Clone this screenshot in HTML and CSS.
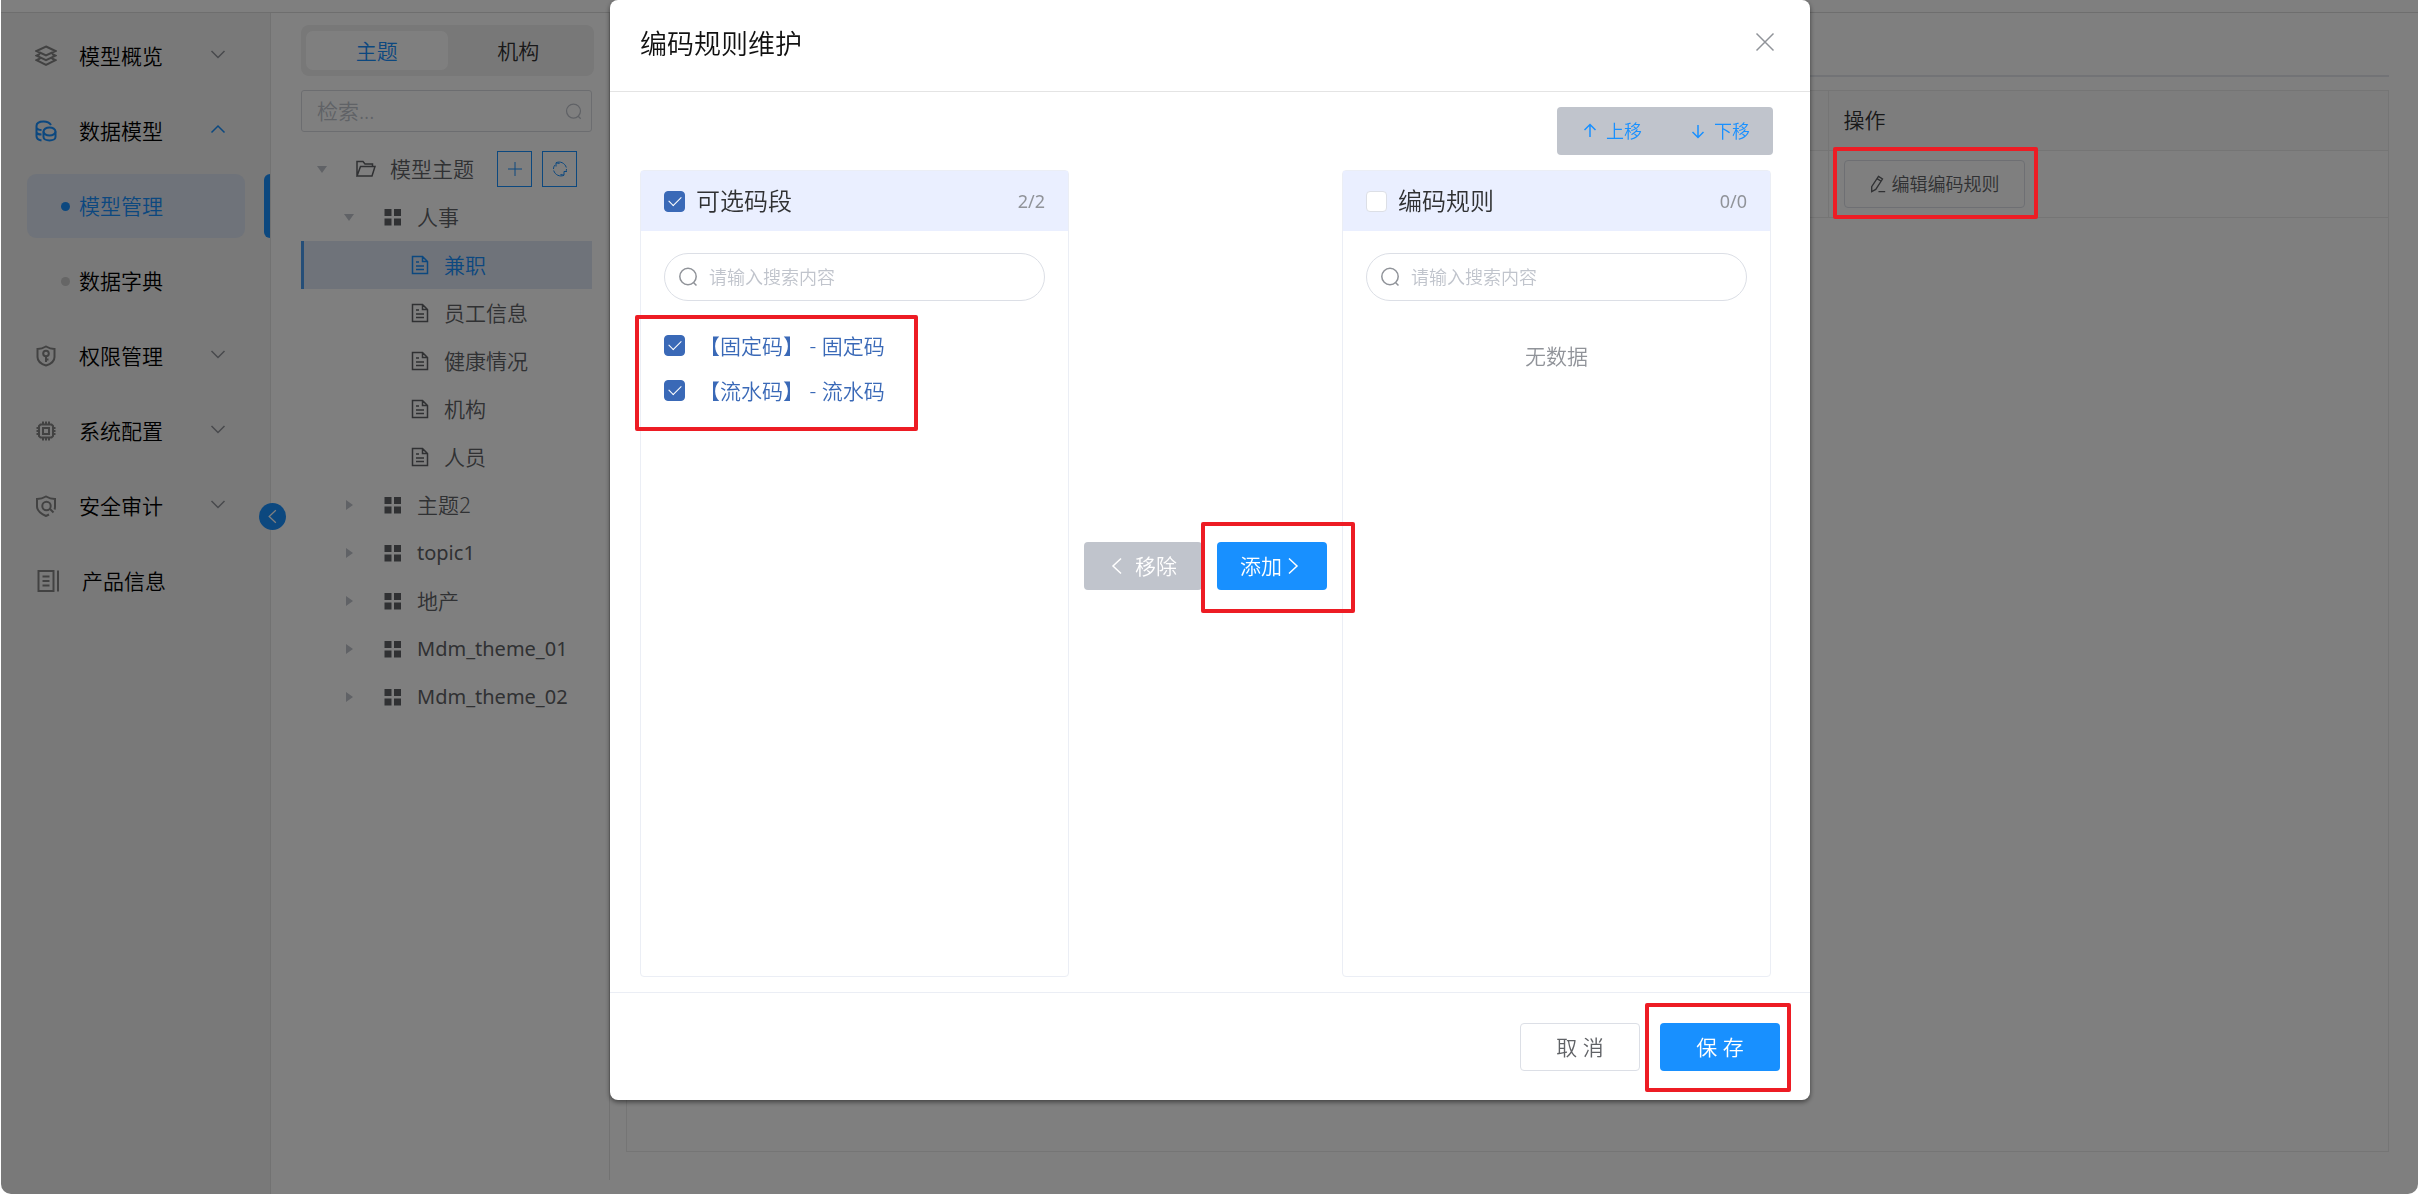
FILE: index.html
```html
<!DOCTYPE html>
<html lang="zh-CN">
<head>
    <meta charset="UTF-8">
    <meta name="viewport" content="width=device-width, initial-scale=1.0">
    <title>编码规则维护</title>
    <link rel="stylesheet" href="styles.css">
</head>
<body>
    <svg class="sprite" aria-hidden="true">
        <symbol id="i-layers" viewBox="0 0 22 22"><path d="M11 1.5 20.5 6 11 10.5 1.5 6zM5 9l-3.500 1.700L11 15.200l9.500-4.500L17 9M5 13.500l-3.500 1.700L11 20l9.500-4.800L17 13.500"/></symbol>
        <symbol id="i-database" viewBox="0 0 22 22"><path d="M16 5C14.500 2.500 12 1.500 8.500 1.500 4.500 1.500 1.500 3 1.500 6v10c0 2.500 2 4 5 4.500M1.500 7.500C2 9 4 10 6.500 10M1.500 12.500c.5 1.200 2 2 5 2"/><ellipse cx="14.500" cy="11.500" rx="6" ry="4"/><path d="M8.500 11.500V17c0 2 2.500 3.500 6 3.500s6-1.500 6-3.500v-5.500"/></symbol>
        <symbol id="i-key" viewBox="0 0 22 22"><path d="M11 1.500C8.500 3 5.500 4 2.500 4v8c0 4 3.500 7 8.500 8.500 5-1.500 8.500-4.500 8.500-8.500V4c-3 0-6-1-8.500-2.500z"/><circle cx="11" cy="8.500" r="2.800"/><path d="M11 11.500V17M11 14.500h2.500"/></symbol>
        <symbol id="i-chip" viewBox="0 0 22 22"><path d="M5.500 4.500h11l1.500 1.500v10l-1.500 1.500h-11L4 16V6zM8 8h6v6H8zM8 1.500V4M11 1.500V4M14 1.500V4M8 18v2.500M11 18v2.500M14 18v2.500M1.500 8H4M1.500 11H4M1.500 14H4M18 8h2.500M18 11h2.500M18 14h2.500"/></symbol>
        <symbol id="i-audit" viewBox="0 0 22 22"><path d="M14 19.500l-3 1.500C5.500 18.500 2 15.500 2 11.500V4c3.500 0 6.500-1 9-2.500C13.500 3 16.500 4 20 4v8c0 1-.2 1.800-.5 2.500"/><circle cx="11.500" cy="11" r="4.200"/><path d="M15 14l3.500 3.500"/></symbol>
        <symbol id="i-info" viewBox="0 0 24 24"><path d="M3 2h15v20H3zM22.500 1.500v21M7 7.500h7M7 12h7M7 16.500h7"/></symbol>
        <symbol id="i-down" viewBox="0 0 16 22"><path d="M1.500 6l6.500 6.500L14.500 6"/></symbol>
        <symbol id="i-up" viewBox="0 0 16 22"><path d="M1.500 12.500L8 6l6.500 6.500"/></symbol>
        <symbol id="i-search" viewBox="0 0 20 20"><circle cx="10" cy="9.500" r="8.200"/><path d="M15.500 15.500l3 3"/></symbol>
        <symbol id="i-folder" viewBox="0 0 20 20"><path d="M1 17V2.500h6L9 5h7.500v2.500M1 17l3.500-9.500H19L16 17z"/></symbol>
        <symbol id="i-grid" viewBox="0 0 20 20"><path d="M1.500 2h7v7h-7zM11 2h7v7h-7zM1.500 11.500h7v7h-7zM11 11.500h7v7h-7z"/></symbol>
        <symbol id="i-doc" viewBox="0 0 20 20"><path d="M2.500 1.500h10l5 5v12h-15zM12.500 1.500v5h5M6 7h3M6 11h8M6 14.500h8"/></symbol>
        <symbol id="i-plus" viewBox="0 0 20 20"><path d="M10 3v14M3 10h14"/></symbol>
        <symbol id="i-refresh" viewBox="0 0 20 20"><path d="M6 3.800C10 1.800 15 4 16.300 8.500M6 3.800V7.500M6 3.800L9.500 4.500M14 16.200C10 18.200 5 16 3.700 11.500M14 16.200V12.500h3M14 16.200l-3.500-.7M3.500 10c0-1.500.5-3 1.500-4M16.500 10c0 1-.2 1.800-.6 2.500"/></symbol>
        <symbol id="i-arrow-up" viewBox="0 0 18 18"><path d="M9 15V3M3.500 8L9 2.500 14.500 8"/></symbol>
        <symbol id="i-arrow-down" viewBox="0 0 18 18"><path d="M9 3v12.500M3.500 10L9 15.500l5.500-5.500"/></symbol>
        <symbol id="i-left" viewBox="0 0 18 18"><path d="M13 1.500L5 9l8 7.500"/></symbol>
        <symbol id="i-right" viewBox="0 0 18 18"><path d="M5 1.500L13 9l-8 7.500"/></symbol>
        <symbol id="i-close" viewBox="0 0 20 20"><path d="M1.500 1.500l17 17M18.500 1.500l-17 17"/></symbol>
        <symbol id="i-edit" viewBox="0 0 18 20"><path d="M9.500 1.500l4.500 3L6.500 16l-4.500 2.500V13zM8 4l4.500 3M9.500 18.500H17"/></symbol>
    </svg>

    <div class="app">
        <div class="topbar"></div>
        <div class="layout">
            <aside class="sidebar">
                <ul class="menu">
                    <li><a href="#"><svg class="icon"><use href="#i-layers"/></svg>模型概览<svg class="arrow"><use href="#i-down"/></svg></a></li>
                    <li class="open"><a href="#"><svg class="icon"><use href="#i-database"/></svg>数据模型<svg class="arrow"><use href="#i-up"/></svg></a></li>
                    <li class="sub active"><a href="#"><span class="dot"></span>模型管理</a></li>
                    <li class="sub"><a href="#"><span class="dot"></span>数据字典</a></li>
                    <li><a href="#"><svg class="icon"><use href="#i-key"/></svg>权限管理<svg class="arrow"><use href="#i-down"/></svg></a></li>
                    <li><a href="#"><svg class="icon"><use href="#i-chip"/></svg>系统配置<svg class="arrow"><use href="#i-down"/></svg></a></li>
                    <li><a href="#"><svg class="icon"><use href="#i-audit"/></svg>安全审计<svg class="arrow"><use href="#i-down"/></svg></a></li>
                    <li><a href="#"><svg class="icon icon-wide"><use href="#i-info"/></svg>产品信息</a></li>
                </ul>
                <button class="collapse" aria-label="收起菜单"><svg><use href="#i-left"/></svg></button>
            </aside>

            <section class="tree-panel">
                <div class="tabs">
                    <button class="tab active">主题</button>
                    <button class="tab">机构</button>
                </div>
                <div class="tree-search">
                    <input type="text" placeholder="检索..." aria-label="检索">
                    <svg><use href="#i-search"/></svg>
                </div>
                <ul class="tree">
                    <li class="level-0"><span class="caret expanded"></span><svg class="node-icon"><use href="#i-folder"/></svg>模型主题
                        <button class="tool tool-first" aria-label="新增"><svg><use href="#i-plus"/></svg></button>
                        <button class="tool" aria-label="刷新"><svg><use href="#i-refresh"/></svg></button>
                    </li>
                    <li class="level-1"><span class="caret expanded"></span><svg class="node-icon solid"><use href="#i-grid"/></svg>人事</li>
                    <li class="level-2 active"><span class="caret"></span><svg class="node-icon"><use href="#i-doc"/></svg>兼职</li>
                    <li class="level-2"><span class="caret"></span><svg class="node-icon"><use href="#i-doc"/></svg>员工信息</li>
                    <li class="level-2"><span class="caret"></span><svg class="node-icon"><use href="#i-doc"/></svg>健康情况</li>
                    <li class="level-2"><span class="caret"></span><svg class="node-icon"><use href="#i-doc"/></svg>机构</li>
                    <li class="level-2"><span class="caret"></span><svg class="node-icon"><use href="#i-doc"/></svg>人员</li>
                    <li class="level-1"><span class="caret closed"></span><svg class="node-icon solid"><use href="#i-grid"/></svg>主题2</li>
                    <li class="level-1 latin"><span class="caret closed"></span><svg class="node-icon solid"><use href="#i-grid"/></svg>topic1</li>
                    <li class="level-1"><span class="caret closed"></span><svg class="node-icon solid"><use href="#i-grid"/></svg>地产</li>
                    <li class="level-1 latin"><span class="caret closed"></span><svg class="node-icon solid"><use href="#i-grid"/></svg>Mdm_theme_01</li>
                    <li class="level-1 latin"><span class="caret closed"></span><svg class="node-icon solid"><use href="#i-grid"/></svg>Mdm_theme_02</li>
                </ul>
            </section>

            <main class="main">
                <div class="main-tabs"></div>
                <div class="table-box">
                    <table class="table">
                        <thead>
                            <tr><th></th><th class="col-action">操作</th></tr>
                        </thead>
                        <tbody>
                            <tr>
                                <td></td>
                                <td class="col-action">
                                    <div class="marked">
                                        <button class="btn btn-edit"><svg><use href="#i-edit"/></svg>编辑编码规则</button>
                                        <span class="mark mark-edit"></span>
                                    </div>
                                </td>
                            </tr>
                        </tbody>
                    </table>
                </div>
            </main>
        </div>
    </div>

    <div class="overlay">
        <div class="dialog" role="dialog" aria-labelledby="dialog-title">
            <header class="dialog-header">
                <h2 id="dialog-title">编码规则维护</h2>
                <button class="close" aria-label="关闭"><svg><use href="#i-close"/></svg></button>
            </header>

            <div class="dialog-body">
                <div class="move-bar">
                    <button class="btn btn-move" disabled><svg><use href="#i-arrow-up"/></svg>上移</button>
                    <button class="btn btn-move" disabled><svg><use href="#i-arrow-down"/></svg>下移</button>
                </div>

                <div class="transfer">
                    <div class="panel">
                        <div class="panel-header">
                            <label><input type="checkbox" checked>可选码段</label>
                            <span class="count">2/2</span>
                        </div>
                        <div class="panel-search">
                            <svg><use href="#i-search"/></svg>
                            <input type="text" placeholder="请输入搜索内容" aria-label="搜索可选码段">
                        </div>
                        <div class="marked">
                            <label class="option"><input type="checkbox" checked>【固定码】 - 固定码</label>
                            <label class="option"><input type="checkbox" checked>【流水码】 - 流水码</label>
                            <span class="mark mark-options"></span>
                        </div>
                    </div>

                    <div class="transfer-buttons">
                        <button class="btn btn-remove" disabled><svg><use href="#i-left"/></svg>移除</button>
                        <div class="marked">
                            <button class="btn btn-add">添加<svg><use href="#i-right"/></svg></button>
                            <span class="mark mark-add"></span>
                        </div>
                    </div>

                    <div class="panel">
                        <div class="panel-header">
                            <label><input type="checkbox">编码规则</label>
                            <span class="count">0/0</span>
                        </div>
                        <div class="panel-search">
                            <svg><use href="#i-search"/></svg>
                            <input type="text" placeholder="请输入搜索内容" aria-label="搜索编码规则">
                        </div>
                        <p class="empty">无数据</p>
                    </div>
                </div>
            </div>

            <footer class="dialog-footer">
                <button class="btn btn-cancel">取 消</button>
                <div class="marked">
                    <button class="btn btn-save">保 存</button>
                    <span class="mark mark-save"></span>
                </div>
            </footer>
        </div>
    </div>
</body>
</html>
```

FILE: styles.css
```css
* { box-sizing: border-box; }
body { margin: 0; background: #fff; color: #606266; font-family: "Noto Sans", "Noto Sans CJK SC", sans-serif; font-size: 21px; font-weight: 350; line-height: 30px; }
ul { list-style: none; margin: 0; padding: 0; }
button, input { font: inherit; color: inherit; }
button { padding: 0; border: none; background: none; cursor: pointer; }
input { outline: none; }
svg { display: block; flex: none; fill: none; stroke: currentColor; stroke-width: 1.5; }
.sprite { position: absolute; width: 0; height: 0; }

/* page behind the dialog */
.app { display: flex; flex-direction: column; height: 100vh; margin-left: 1px; border-radius: 0 0 10px 10px; overflow: hidden; }
.topbar { flex: none; height: 13px; border-bottom: 1px solid #dcdcdc; }
.layout { display: flex; flex: 1; min-height: 0; }

.sidebar { position: relative; flex: none; width: 270px; padding-top: 6px; background: #f2f2f2; border-right: 1px solid #e4e4e4; }
.menu li { position: relative; padding: 5px 25px 6px 26px; }
.menu a { display: flex; align-items: center; gap: 22px; height: 64px; padding: 0 19px 0 8px; border-radius: 9px; color: #000; text-decoration: none; }
.menu .icon { width: 22px; height: 22px; color: #858585; stroke-width: 2; }
.menu .icon-wide { width: 25px; height: 24px; }
.menu .arrow { width: 16px; height: 22px; margin-left: auto; color: #909399; }
.menu .open .icon, .menu .open .arrow { color: #1890ff; }
.menu .sub a { gap: 9px; padding-left: 34px; }
.dot { width: 9px; height: 9px; border-radius: 50%; background: #ccc; }
.menu .active a { background: #dfe7f4; color: #1890ff; }
.menu .active .dot { background: #1890ff; }
.menu .active::after { content: ""; position: absolute; right: 0; top: 5px; width: 6px; height: 64px; border-radius: 6px 0 0 6px; background: #1890ff; }
.collapse { position: absolute; top: 490px; right: -16px; display: flex; align-items: center; justify-content: center; width: 27px; height: 27px; border-radius: 50%; background: #1890ff; color: #fff; }
.collapse svg { width: 15px; height: 15px; }

.tree-panel { flex: none; width: 338px; padding: 12px 15px 0 30px; }
.tabs { display: flex; height: 51px; padding: 6px 5px; border-radius: 8px; background: #f0f0f0; }
.tab { flex: 1; border-radius: 7px; color: #303133; }
.tab.active { background: #fff; color: #1890ff; }
.tree-search { display: flex; align-items: center; height: 42px; margin: 14px 2px 13px 0; padding: 0 9px 0 15px; border: 1px solid #d8dae0; border-radius: 3px; color: #c0c4cc; }
.tree-search input { flex: 1; min-width: 0; padding: 0; border: none; background: none; }
.tree-search svg { width: 17px; height: 17px; }
input::placeholder { color: #c0c4cc; opacity: 1; }
.tree li { display: flex; align-items: center; height: 48px; margin-right: 2px; white-space: nowrap; }
.tree .level-0 { padding-left: 9px; }
.tree .level-1 { padding-left: 36px; }
.tree .level-2 { padding-left: 63px; }
.tree .latin { font-size: 20px; font-weight: 400; }
.tree .active { padding-left: 60px; border-left: 3px solid #4a9df0; background: #dfe7f4; color: #1890ff; }
.caret { display: flex; justify-content: center; width: 24px; margin-right: 22px; }
.caret::before { border: 0 solid transparent; }
.caret.expanded::before { content: ""; border-width: 7px 5px 0; border-top-color: #c0c4cc; }
.caret.closed::before { content: ""; border-width: 5px 0 5px 7px; border-left-color: #c0c4cc; }
.node-icon { width: 20px; height: 20px; margin-right: 14px; }
.node-icon.solid { fill: currentColor; stroke: none; }
.tool { display: flex; align-items: center; justify-content: center; width: 35px; height: 36px; margin-left: 10px; border: 1px solid #1890ff; color: #1890ff; }
.tool-first { margin-left: 23px; }
.tool svg { width: 20px; height: 20px; stroke-width: 1; }

.main { display: flex; flex-direction: column; flex: 1; min-width: 0; margin-bottom: 14px; padding: 0 29px 28px 16px; border-left: 1px solid #e4e4e4; }
.main-tabs { flex: none; height: 64px; margin-bottom: 13px; border-bottom: 2px solid #e4e7ed; }
.table-box { flex: 1; border: 1px solid #ebebeb; }
.table { width: 100%; border-collapse: collapse; table-layout: fixed; }
.table th { height: 59px; background: #fafafa; color: #303133; font-weight: inherit; text-align: left; }
.table td { height: 67px; }
.table th, .table td { padding: 0 15px; border-bottom: 1px solid #ebebeb; }
.table .col-action { width: 560px; border-left: 1px solid #ebebeb; }

/* buttons */
.btn { display: flex; align-items: center; justify-content: center; height: 48px; padding: 0 24px; border: 1px solid transparent; border-radius: 4px; white-space: nowrap; }
.btn svg { width: 18px; height: 18px; }
.btn-edit { gap: 5px; border-color: #dcdfe6; font-size: 18px; }
.btn-move { gap: 7px; padding: 0 22px 0 23px; color: #1890ff; font-size: 18px; }
.btn-remove { gap: 9px; padding: 0 24px 0 23px; background: #c0c4cc; color: #fff; }
.btn-add { gap: 2px; padding: 0 24px 0 22px; background: #1890ff; color: #fff; }
.btn-cancel { width: 120px; border-color: #dcdfe6; }
.btn-save { width: 120px; background: #1890ff; color: #fff; }

/* dialog */
.overlay { position: fixed; top: 0; right: 0; bottom: 0; left: 1px; padding-left: 1px; border-radius: 0 0 10px 10px; background: rgba(0, 0, 0, 0.5); }
.dialog { display: flex; flex-direction: column; width: 90%; max-width: 1200px; height: calc(100vh - 94px); margin: 0 auto; border-radius: 8px; background: #fff; box-shadow: 0 2px 5px rgba(0, 0, 0, 0.5); }
.dialog-header { display: flex; align-items: center; justify-content: space-between; height: 92px; padding: 0 35px 4px 30px; border-bottom: 1px solid #e4e4e4; }
.dialog-header h2 { margin: 0; color: #111; font-size: 27px; font-weight: inherit; line-height: 36px; }
.close { margin-bottom: 4px; color: #909399; }
.close svg { width: 20px; height: 20px; }
.dialog-body { display: flex; flex-direction: column; flex: 1; min-height: 0; padding: 15px 37px 15px 30px; }
.move-bar { display: flex; align-self: flex-end; border-radius: 4px; background: #c0c4cc; }
.transfer { display: flex; flex: 1; min-height: 0; margin: 15px 2px 0 0; }
.panel { flex: 1; border: 1px solid #ebeef5; border-radius: 4px; }
.panel-header { display: flex; align-items: center; justify-content: space-between; height: 60px; padding: 0 23px; background: #eaefff; color: #303133; font-size: 24px; }
.panel-header label { display: flex; align-items: center; gap: 11px; }
.count { color: #909399; font-size: 18px; font-weight: 400; }
.panel-search { display: flex; align-items: center; gap: 11px; height: 48px; margin: 22px 23px; padding: 0 13px; border: 1px solid #dcdfe6; border-radius: 24px; color: #909399; font-size: 18px; }
.panel-search svg { width: 20px; height: 20px; }
.panel-search input { flex: 1; min-width: 0; padding: 0; border: none; background: none; }
.option { display: flex; align-items: center; gap: 14px; height: 45px; padding: 0 23px; color: #3a69b7; white-space: pre; }
.empty { margin: 40px 0 0; color: #909399; text-align: center; }
.transfer-buttons { display: flex; align-items: center; gap: 15px; margin: 0 15px 15px; }
.dialog-footer { display: flex; justify-content: flex-end; gap: 20px; height: 108px; padding: 30px; border-top: 1px solid #ebeef5; }

input[type="checkbox"] { appearance: none; display: flex; justify-content: center; width: 21px; height: 21px; margin: 0; border: 1px solid #dcdfe6; border-radius: 4px; background: #fff; }
input[type="checkbox"]:checked { border-color: #3a69b7; background: #3a69b7; }
input[type="checkbox"]:checked::after { content: ""; width: 11px; height: 6px; margin-top: 4px; border: solid #fff; border-width: 0 0 1px 1px; transform: rotate(-45deg); }

/* red highlight frames */
.marked { position: relative; width: fit-content; }
.panel .marked { width: auto; }
.mark { position: absolute; z-index: 5; border: 4px solid #ed1c24; border-radius: 2px; pointer-events: none; }
.mark-edit { inset: -13px -13px -11px -11px; }
.mark-options { top: -8px; bottom: -18px; left: -6px; width: 283px; }
.mark-add { inset: -20px -28px -23px -16px; }
.mark-save { inset: -20px -11px -22px -15px; }
```
